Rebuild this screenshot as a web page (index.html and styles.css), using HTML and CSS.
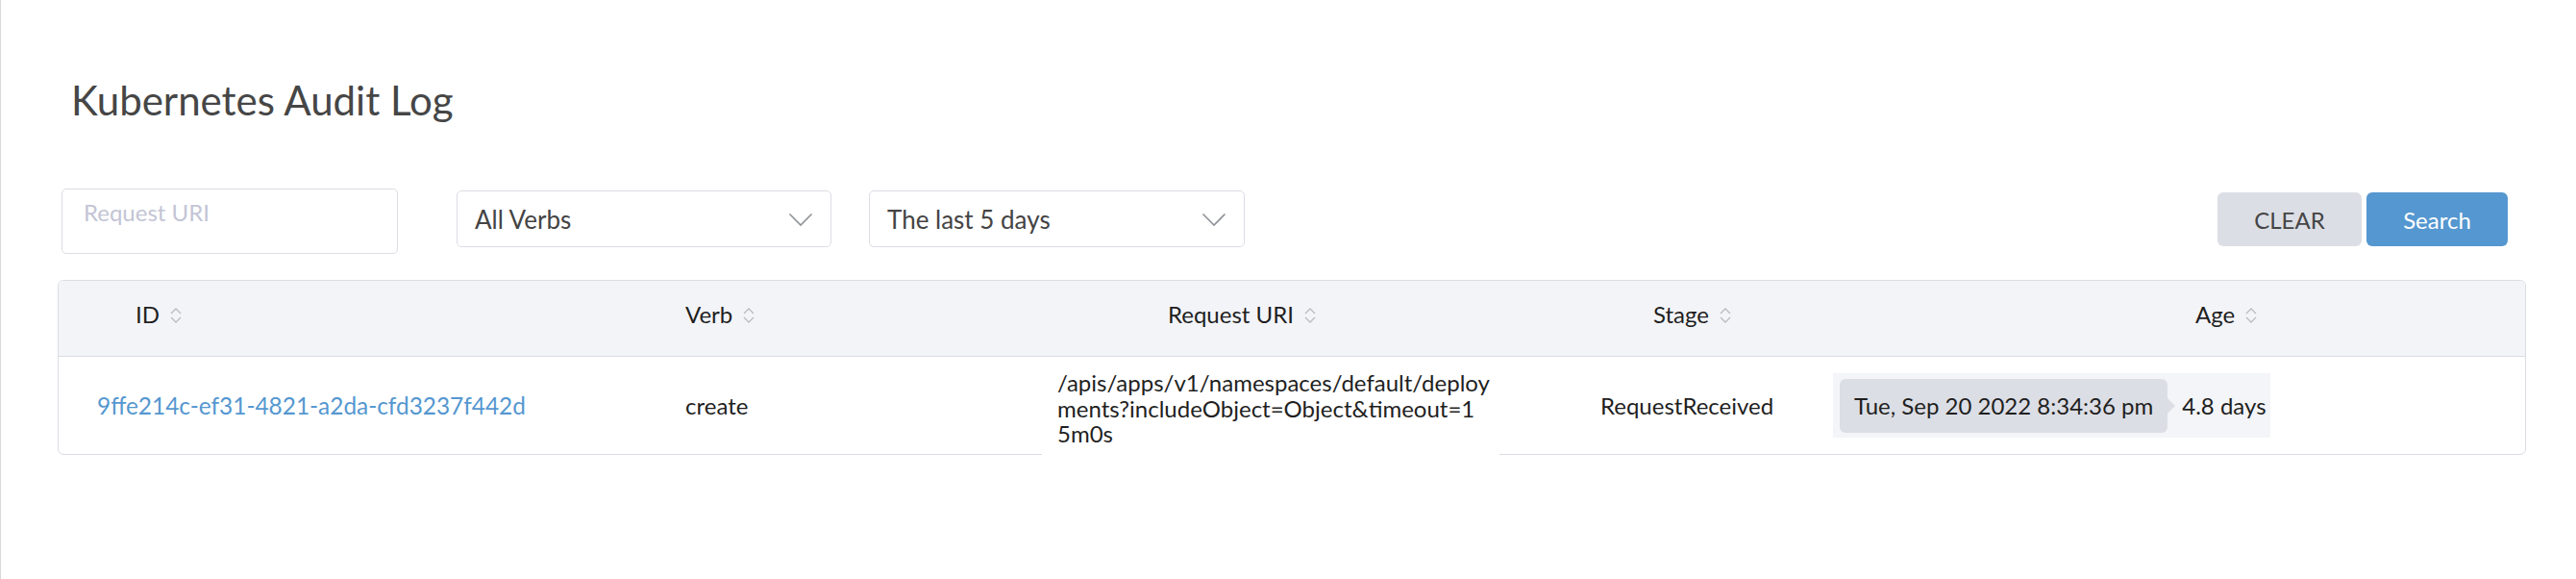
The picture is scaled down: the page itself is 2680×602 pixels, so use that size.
FILE: index.html
```html
<!DOCTYPE html>
<html lang="en">
<head>
<meta charset="utf-8">
<title>Kubernetes Audit Log</title>
<link rel="stylesheet" href="styles.css">
</head>
<body>
<div class="page">
  <h1 class="title">Kubernetes Audit Log</h1>
  <div class="filters">
    <div class="search-input" role="textbox" aria-label="Request URI"><span class="placeholder">Request URI</span></div>
    <div class="select verbs">
      <span>All Verbs</span>
      <svg class="chev" width="26" height="15" viewBox="0 0 26 15"><path d="M1.5 1.5 L13 13 L24.5 1.5" fill="none" stroke="#8f9399" stroke-width="1.6"/></svg>
    </div>
    <div class="select range">
      <span>The last 5 days</span>
      <svg class="chev" width="26" height="15" viewBox="0 0 26 15"><path d="M1.5 1.5 L13 13 L24.5 1.5" fill="none" stroke="#8f9399" stroke-width="1.6"/></svg>
    </div>
    <div class="actions">
      <button class="btn btn-clear">CLEAR</button>
      <button class="btn btn-primary">Search</button>
    </div>
  </div>
  <div class="table">
    <div class="thead">
      <div class="th th-id">ID <svg class="sort" width="14" height="20" viewBox="0 0 14 20"><path d="M2 8 L7 3 L12 8 M2 12 L7 17 L12 12" fill="none" stroke="#b9bcc2" stroke-width="1.3"/></svg></div>
      <div class="th th-verb">Verb <svg class="sort" width="14" height="20" viewBox="0 0 14 20"><path d="M2 8 L7 3 L12 8 M2 12 L7 17 L12 12" fill="none" stroke="#b9bcc2" stroke-width="1.3"/></svg></div>
      <div class="th th-uri">Request URI <svg class="sort" width="14" height="20" viewBox="0 0 14 20"><path d="M2 8 L7 3 L12 8 M2 12 L7 17 L12 12" fill="none" stroke="#b9bcc2" stroke-width="1.3"/></svg></div>
      <div class="th th-stage">Stage <svg class="sort" width="14" height="20" viewBox="0 0 14 20"><path d="M2 8 L7 3 L12 8 M2 12 L7 17 L12 12" fill="none" stroke="#b9bcc2" stroke-width="1.3"/></svg></div>
      <div class="th th-age">Age <svg class="sort" width="14" height="20" viewBox="0 0 14 20"><path d="M2 8 L7 3 L12 8 M2 12 L7 17 L12 12" fill="none" stroke="#b9bcc2" stroke-width="1.3"/></svg></div>
    </div>
    <div class="trow">
      <div class="td td-id"><a class="link" href="#">9ffe214c-ef31-4821-a2da-cfd3237f442d</a></div>
      <div class="td td-verb">create</div>
      <div class="td td-uri"><div class="uri-box">/apis/apps/v1/namespaces/default/deploy<br>ments?includeObject=Object&amp;timeout=1<br>5m0s</div></div>
      <div class="td td-stage">RequestReceived</div>
      <div class="td td-age">
        <div class="age-box">
          <span class="tip">Tue, Sep 20 2022 8:34:36 pm</span><span class="tip-arrow"></span><span class="age">4.8 days</span>
        </div>
      </div>
    </div>
  </div>
</div>
</body>
</html>
```

FILE: styles.css
```css
html, body {
  margin: 0;
  background: #ffffff;
}

body {
  font-family: Lato, "Open Sans", "Liberation Sans", sans-serif;
  color: #1f1f1f;
}

.page {
  min-height: 602px;
  box-sizing: border-box;
  border-left: 1px solid #d9d9d9;
  padding: 78px 52px 0 59px;
}

.title {
  margin: 0 0 66px 14px;
  font-size: 42px;
  line-height: 52px;
  font-weight: 400;
  color: #464646;
}

.filters {
  display: flex;
  align-items: flex-start;
  height: 68px;
  margin-bottom: 27px;
}

.search-input {
  margin-left: 4px;
  width: 350px;
  height: 68px;
  box-sizing: border-box;
  border: 1px solid #dcdde4;
  border-radius: 5px;
  padding: 9px 20px 0 22px;
  font-size: 24px;
  line-height: 30px;
  background: #fff;
}

.placeholder {
  color: #c3c5d5;
}

.select {
  margin-top: 2px;
  height: 59px;
  box-sizing: border-box;
  border: 1px solid #dcdde4;
  border-radius: 5px;
  display: flex;
  align-items: center;
  justify-content: space-between;
  padding: 0 18px 0 18px;
  font-size: 26px;
  color: #444;
  background: #fff;
}

.chev {
  display: block;
  margin-top: 2px;
}

.verbs {
  margin-left: 61px;
  width: 390px;
}

.range {
  margin-left: 39px;
  width: 391px;
}

.actions {
  margin-left: auto;
  margin-right: 19px;
  margin-top: 4px;
  display: flex;
  gap: 5px;
}

.btn {
  height: 56px;
  border: 0;
  border-radius: 6px;
  font-family: Lato, "Open Sans", sans-serif;
  font-size: 24px;
  padding: 0;
  cursor: pointer;
}

.btn-clear {
  width: 150px;
  background: #dcdee5;
  color: #454545;
}

.btn-primary {
  width: 147px;
  background: #5597d0;
  color: #fff;
}

.table {
  border: 1px solid #dcdde4;
  border-radius: 6px;
}

.thead,
.trow {
  display: grid;
  grid-template-columns: 600px 411px 508px 320px 1fr;
}

.thead {
  height: 78px;
  background: #f3f4f8;
  border-bottom: 1px solid #dcdde4;
  border-radius: 6px 6px 0 0;
}

.th {
  display: flex;
  align-items: center;
  gap: 10px;
  height: 30px;
  padding-top: 20px;
  font-size: 24px;
  line-height: 30px;
  color: #1f1f1f;
}

.sort {
  display: block;
  margin-top: 2px;
}

.th-id { padding-left: 80px; }
.th-verb { padding-left: 52px; }
.th-uri { padding-left: 143px; }
.th-stage { padding-left: 140px; }
.th-age { padding-left: 384px; }

.trow {
  height: 101px;
  align-items: center;
}

.td {
  font-size: 24px;
  line-height: 30px;
  color: #1f1f1f;
}

.td-id { padding-left: 40px; }
.td-verb { padding-left: 52px; }
.td-stage { padding-left: 85px; }
.td-age { padding-left: 7px; }

.link {
  color: #5597d0;
  text-decoration: none;
  font-size: 24.4px;
}

.td-uri {
  align-self: stretch;
  margin-bottom: -1px;
  padding-left: 12px;
}

.uri-box {
  box-sizing: border-box;
  width: 476px;
  height: 100%;
  background: #fff;
  padding: 14px 6px 0 16px;
  line-height: 26.7px;
  white-space: nowrap;
}

.age-box {
  display: inline-flex;
  align-items: center;
  background: #f4f5f8;
  padding: 6px 4px 5px 7px;
}

.tip {
  display: block;
  height: 56px;
  line-height: 56px;
  padding: 0 15px;
  background: #dcdee5;
  border-radius: 6px;
  font-size: 24px;
  color: #1f1f1f;
}

.tip-arrow {
  display: block;
  width: 0;
  height: 0;
  border-top: 8px solid transparent;
  border-bottom: 8px solid transparent;
  border-left: 8px solid #dcdee5;
  margin-right: 7px;
}

.age {
  font-size: 24px;
  color: #1f1f1f;
}
```
